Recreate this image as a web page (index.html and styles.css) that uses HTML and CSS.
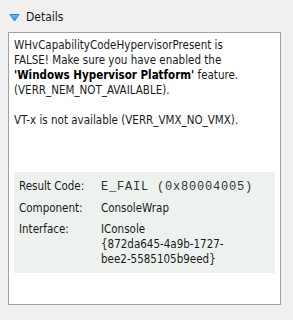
FILE: index.html
```html
<!DOCTYPE html>
<html lang="en">
<head>
    <meta charset="UTF-8">
    <title>Details</title>
    <link rel="stylesheet" href="styles.css">
</head>
<body>
    <div class="toggle">
        <svg class="arrow" width="11" height="9" viewBox="0 0 11 9">
            <defs>
                <linearGradient id="blue" x1="0" y1="0" x2="0" y2="1">
                    <stop offset="0" stop-color="#7cc3f0"/>
                    <stop offset="1" stop-color="#2a86d4"/>
                </linearGradient>
            </defs>
            <path d="M1 1.5 L10 1.5 L5.5 8 Z" fill="url(#blue)" stroke="#2f7fc4" stroke-width="1" stroke-linejoin="round"/>
        </svg>
        <span>Details</span>
    </div>

    <div class="details">
        <p class="msg">WHvCapabilityCodeHypervisorPresent is<br>FALSE! Make sure you have enabled the<br><b>'Windows Hypervisor Platform'</b> feature.<br>(VERR_NEM_NOT_AVAILABLE).</p>
        <p class="msg">VT-x is not available (VERR_VMX_NO_VMX).</p>

        <table class="info">
            <tr>
                <td class="label">Result Code:</td>
                <td><span class="code">E_FAIL (0x80004005)</span></td>
            </tr>
            <tr>
                <td class="label">Component:</td>
                <td>ConsoleWrap</td>
            </tr>
            <tr>
                <td class="label">Interface:</td>
                <td>IConsole<br>{872da645-4a9b-1727-<br>bee2-5585105b9eed}</td>
            </tr>
        </table>
    </div>
</body>
</html>
```

FILE: styles.css
```css
body {
    margin: 0;
    padding: 8px 12px 9px 8px;
    background: #f0f0f0;
    font-family: "DejaVu Sans Condensed", "DejaVu Sans", sans-serif;
    font-size: 11.5px;
    color: #1a1a1a;
}
.toggle {
    display: flex;
    align-items: center;
    gap: 6px;
    height: 18px;
    margin-bottom: 6px;
    font-size: 12px;
}
.arrow { margin-left: 1px; }
.details {
    background: #fff;
    border: 1px solid #a0a0a0;
    padding: 5px 5px 31px 5px;
}
.msg {
    margin: 0 0 15px 0;
    line-height: 15px;
}
.msg b { color: #000; }
.info {
    margin-top: 44px;
    width: 100%;
    background: #eef2ee;
    border-collapse: collapse;
    line-height: 15px;
}
.info td {
    padding: 3px 0 3px 0;
    vertical-align: top;
}
.info tr:first-child td { padding-top: 7px; }
.info tr:last-child td { padding-bottom: 6px; }
.info .label {
    width: 82px;
    padding-left: 5px;
}
.code {
    font-family: "Liberation Mono", monospace;
    font-size: 12px;
    letter-spacing: 0.8px;
    color: #333;
}
```
